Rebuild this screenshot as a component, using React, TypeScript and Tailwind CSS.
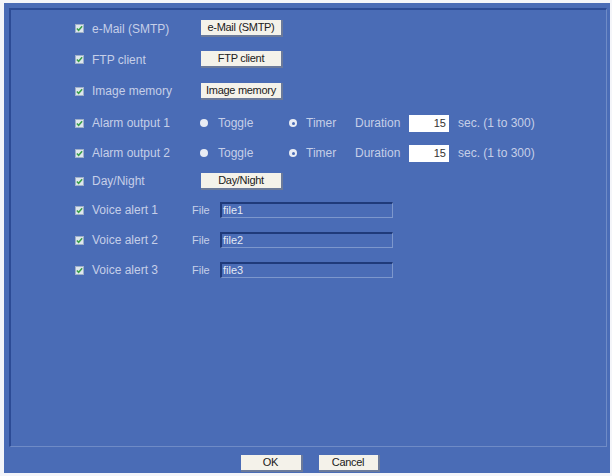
const font = "font-['Liberation_Sans',Arial,sans-serif]";

const Check = () => (
  <span className="w-[9px] h-[9px] bg-[#dfe6ee] border border-[#9fb0c8] flex items-center justify-center shrink-0">
    <svg viewBox="0 0 8 8" className="w-[7px] h-[7px]">
      <path d="M1 4 L3 6 L7 1.5" stroke="#3aa04a" strokeWidth="1.8" fill="none" />
    </svg>
  </span>
);

const Btn = ({ label, w = "w-[82px]" }: { label: string; w?: string }) => (
  <div
    className={`${w} h-[17px] bg-[#f4f2ea] border-r-2 border-b-2 border-[#6b7a9a] flex items-center justify-center text-[11px] text-[#202020] tracking-[-0.3px]`}
  >
    {label}
  </div>
);

const Radio = ({ on }: { on: boolean }) => (
  <span className="w-[8px] h-[8px] rounded-full bg-[#e8ecf4] flex items-center justify-center shrink-0">
    {!on && <span className="w-[3px] h-[3px] rounded-full bg-[#4a6cb6]" />}
  </span>
);

const Label = ({ text }: { text: string }) => (
  <div className="flex items-center">
    <Check />
    <span className="ml-[8px] text-[#c6cfe8] text-[12px]">{text}</span>
  </div>
);

const Row = ({ h, children }: { h: string; children: React.ReactNode }) => (
  <div className={`${h} flex items-center pl-[64px]`}>{children}</div>
);

const ButtonRow = ({ text, btn, h }: { text: string; btn: string; h: string }) => (
  <Row h={h}>
    <div className="w-[126px]">
      <Label text={text} />
    </div>
    <Btn label={btn} />
  </Row>
);

const AlarmRow = ({ text, h }: { text: string; h: string }) => (
  <Row h={h}>
    <div className="w-[125px]">
      <Label text={text} />
    </div>
    <Radio on />
    <span className="ml-[10px] w-[71px] text-[12px] text-[#c6cfe8]">Toggle</span>
    <Radio on={false} />
    <span className="ml-[9px] w-[49px] text-[12px] text-[#c6cfe8]">Timer</span>
    <span className="w-[54px] text-[12px] text-[#c6cfe8]">Duration</span>
    <div className="w-[40px] h-[17px] bg-white text-right pr-[3px] text-[11px] text-[#333] leading-[17px]">
      15
    </div>
    <span className="ml-[9px] text-[12px] text-[#c6cfe8]">sec. (1 to 300)</span>
  </Row>
);

const VoiceRow = ({ n }: { n: number }) => (
  <Row h="h-[30px]">
    <div className="w-[117px]">
      <Label text={`Voice alert ${n}`} />
    </div>
    <span className="w-[28px] text-[11px] text-[#c6cfe8]">File</span>
    <div className="w-[173px] h-[16px] border-t-2 border-l-2 border-[#1f3a7a] border-r border-b border-r-[#7d97cc] border-b-[#7d97cc] bg-[#4a6cb6] text-[11px] text-[#e4e9f4] pl-[1px] leading-[13px]">
      file{n}
    </div>
  </Row>
);

export default function App() {
  return (
    <div className={`w-[612px] h-[476px] bg-[#f4f5f9] pt-[3px] pl-[4px] pr-[2px] pb-[3px] ${font}`}>
      <div className="h-full bg-[#4a6cb6] flex flex-col pt-[5px] pl-[5px] pr-[3px]">
        <div className="h-[439px] border-t-2 border-l-2 border-[#2c4b95] border-r border-b border-r-[#6f8bc6] border-b-[#6f8bc6] pt-[3px]">
          <ButtonRow h="h-[31px]" text="e-Mail (SMTP)" btn="e-Mail (SMTP)" />
          <ButtonRow h="h-[31px]" text="FTP client" btn="FTP client" />
          <ButtonRow h="h-[32px]" text="Image memory" btn="Image memory" />
          <AlarmRow h="h-[32px]" text="Alarm output 1" />
          <AlarmRow h="h-[28px]" text="Alarm output 2" />
          <ButtonRow h="h-[28px]" text="Day/Night" btn="Day/Night" />
          <VoiceRow n={1} />
          <VoiceRow n={2} />
          <VoiceRow n={3} />
        </div>
        <div className="flex justify-center gap-[16px] pt-[8px] pl-[4px]">
          <Btn label="OK" w="w-[62px]" />
          <Btn label="Cancel" w="w-[61px]" />
        </div>
      </div>
    </div>
  );
}
